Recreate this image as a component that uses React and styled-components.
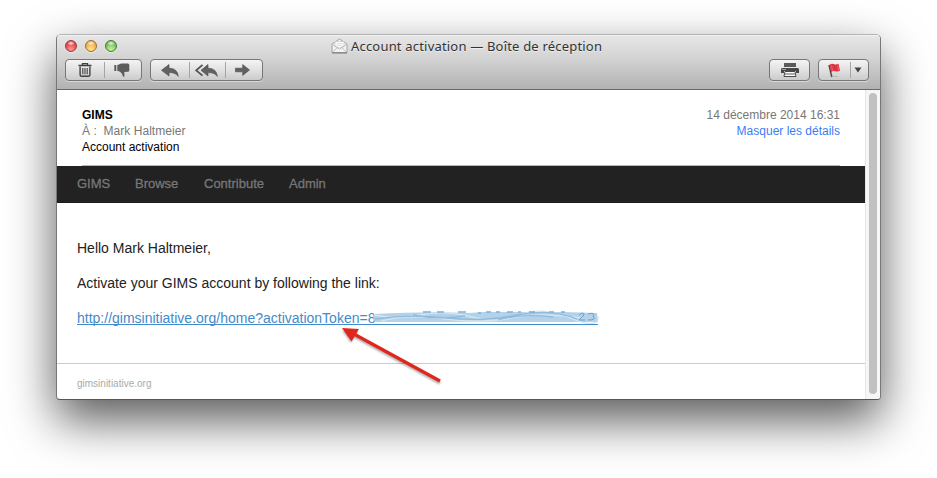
import React from 'react';
import styled, { createGlobalStyle } from 'styled-components';

const Global = createGlobalStyle`
  body { margin: 0; background: #fff; font-family: "Liberation Sans", Arial, sans-serif; }
  * { box-sizing: border-box; }
`;
const Desktop = styled.main`
  width: 937px; height: 478px; padding: 34px 56px; overflow: hidden;
`;
const Window = styled.section`
  width: 825px; height: 366px; border: 1px solid #777; border-top-color: #b4b4b4;
  border-bottom-color: #555; border-radius: 5px 5px 4px 4px; overflow: hidden; background: #fff;
  box-shadow: 0 20px 48px rgba(0,0,0,.66);
`;
const Chrome = styled.header`
  height: 55px; border-bottom: 1px solid #686868;
  background: linear-gradient(#e7e7e7, #d2d2d2 45%, #b2b2b2);
  box-shadow: inset 0 1px #f2f2f2;
`;
const TitleBar = styled.div`
  height: 24px; display: grid; grid-template-columns: 274px 1fr; align-items: center;
`;
const Lights = styled.div`display: flex; gap: 8px; padding-left: 8px; height: 14px;`;
const Light = styled.i`
  width: 12px; height: 12px; border-radius: 50%; border: 1px solid ${p => p.$edge};
  background: radial-gradient(ellipse 4px 2.5px at 50% 22%, #fffd, #fff0),
    radial-gradient(circle at 50% 85%, ${p => p.$glow}, ${p => p.$color} 75%);
  box-shadow: 0 1px #fff8;
`;
const Title = styled.h1`
  margin: -2px 0 0; display: flex; align-items: center; gap: 3px; font: 13px/20px "Noto Sans", sans-serif;
  color: #333; white-space: nowrap; text-shadow: 0 1px #fff8; letter-spacing: ${p => p.$track};
`;
const Toolbar = styled.div`display: flex; padding: 0 11px 0 8px;`;
const Group = styled.div`
  height: 22px; width: ${p => p.$w}px; margin-left: ${p => p.$gap || 0};
  border: 1px solid #777; border-radius: 4px; display: flex;
  background: linear-gradient(#f4f4f4, #e1e1e1 50%, #cbcbcb);
  box-shadow: 0 1px #ffffff70;
`;
const Tool = styled.button`
  width: ${p => p.$w}px; flex: none; padding: 0; border: 0; background: none; display: flex;
  align-items: center; justify-content: center; height: 20px;
  & + & { border-left: 1px solid #a5a5a5; height: 16px; margin-top: 2px; }
  svg { display: block; flex: none; margin-right: ${p => p.$nudge || 0}; }
`;
const Content = styled.div`display: flex; height: 309px;`;
const Message = styled.article`width: 808px;`;
const Details = styled.div`
  height: 76px; margin: 0 25px; padding-top: 17px; border-bottom: 1px solid #b3b8b5;
  display: flex; justify-content: space-between; font-size: 12px; line-height: 16px;
`;
const Column = styled.div`display: flex; flex-direction: column; align-items: ${p => p.$end ? 'flex-end' : 'flex-start'};`;
const Line = styled.span`
  color: ${p => p.$color || '#000'}; font-weight: ${p => p.$bold ? 700 : 400};
  letter-spacing: ${p => p.$track || 'normal'}; white-space: pre;
`;
const Nav = styled.nav`
  height: 37px; padding: 1px 20px 0; background: #222; border-bottom: 1px solid #1c1c1c;
  display: flex; font-size: 13px; line-height: 33px; color: #777;
  -webkit-text-stroke: .3px #777;
`;
const NavItem = styled.span`width: ${p => p.$w}px;`;
const Body = styled.div`
  height: 161px; padding: 35px 20px 0; border-bottom: 1px solid #ccc;
  font-size: 14px; line-height: 20px; color: #222;
`;
const Paragraph = styled.p`margin: 0 0 15px; white-space: nowrap;`;
const LinkRow = styled.div`
  position: relative; width: 521px; height: 17px; border-bottom: 1px solid #428bca; color: #428bca;
  line-height: 20px; white-space: nowrap;
`;
const Smudge = styled.svg`position: absolute; left: 296px; top: 2px; filter: blur(.5px);`;
const Arrow = styled.svg`position: absolute; left: 260px; top: 11px; overflow: visible;`;
const ArrowShade = styled.g`filter: blur(1px);`;
const Footer = styled.footer`padding: 13px 20px; font-size: 10px; line-height: 14px; color: #aaa;`;
const Scroll = styled.aside`
  width: 15px; padding: 3px 3px 5px; background: #f6f6f6; border-left: 1px solid #e7e7e7;
`;
const Thumb = styled.div`width: 8px; height: 301px; border-radius: 4px; background: #c1c1c1;`;

const Envelope = () => (
  <svg width="17" height="16" viewBox="0 0 17 16" fill="none">
    <path d="M1 6 8.500 1 16 6v8.500H1Z" fill="#f3f3f3" stroke="#a2a2a2" />
    <path d="M4 3.500h9v5L8.500 10 4 8.500Z" fill="#fff" stroke="#c8c8c8" strokeWidth=".8" />
    <path d="M5.500 5.500h6M5.500 7.300h6" stroke="#ccc" strokeWidth=".7" />
    <path d="m1.500 6.500 7 4.500 7-4.500M1.500 14l5-4.500M15.500 14l-5-4.500" stroke="#b1b1b1" strokeWidth=".8" />
    <path d="M1 15h15" stroke="#777" />
  </svg>
);
const Trash = () => (
  <svg width="14" height="14" viewBox="0 0 14 14" fill="none" stroke="#3f3f3f">
    <path d="M.5 2.500h13M4.500 2V.6h5V2" strokeWidth="1.300" />
    <path d="M2.100 3.500v8.200q0 1.600 1.600 1.600h6.600q1.600 0 1.600-1.600V3.500" strokeWidth="1.400" />
    <path d="M4.800 5v6.300M7 5v6.300M9.200 5v6.300" strokeWidth="1.100" />
  </svg>
);
const Thumbs = () => (
  <svg width="16" height="14" viewBox="0 0 16 14" fill="#5d5d5d">
    <path d="M.3 2h2v6h-2Z" />
    <path d="M3.300 2 5 1.400Q6.200.4 8 .4h5.800q1.500 0 1.500 1.500v5q0 1.800-1.500 1.900l-3.200.2q-.6.900-.2 2 .7 2.500-.7 2.800-1 0-1-1.400Q8.300 10.600 6 8.700L3.300 7.800Z" />
  </svg>
);
const Reply = () => (
  <svg width="18" height="13" viewBox="0 0 18 13">
    <path d="M.5 6.300 8 .5v3.700q8.500 0 9.300 8.200Q14.500 8.400 8 8.600V12Z" fill="#626262" stroke="#484848" strokeWidth=".6" />
  </svg>
);
const ReplyAll = () => (
  <svg width="23" height="13" viewBox="0 0 23 13">
    <path d="M6 6.300 13 .5v3.700q8.500 0 9.300 8.200Q19.500 8.400 13 8.600V12Z" fill="#626262" stroke="#484848" strokeWidth=".6" />
    <path d="M7.500.8 1.200 6.300l6.300 5.400" fill="none" stroke="#505050" strokeWidth="1.700" />
  </svg>
);
const Forward = () => (
  <svg width="15" height="12" viewBox="0 0 15 12">
    <path d="M.4 4.200h7.300V.6L14.500 6l-6.800 5.400V7.800H.4Z" fill="#626262" stroke="#484848" strokeWidth=".6" />
  </svg>
);
const Printer = () => (
  <svg width="18" height="14" viewBox="0 0 18 14">
    <path d="M3 0h12v4H3Z" fill="#5a5a5a" />
    <path d="M1 5h16l1 1v4h-3V8H3v2H0V6Z" fill="#484848" />
    <path d="M1.500 6.500h1M3.500 6.500h1" stroke="#eee" />
    <path d="M4 8.500h10l1 5H3Z" fill="#fff" stroke="#4a4a4a" />
    <path d="M4 11h10" stroke="#555" />
  </svg>
);
const Flag = () => (
  <svg width="13" height="15" viewBox="0 0 13 15">
    <path d="m1 2 2.800 12" stroke="#574848" strokeWidth="1.500" />
    <path d="M1.500 2q2.200-2 4.800-.8Q8.500 2 10.500.8l1.500 7q-2.500 1.300-4.500.5-2-.8-4.500.6Z" fill="#de3442" />
    <path d="m3.500 2.500 1 5.500M9.600 2.500l.9 5" stroke="#f07078" strokeWidth=".8" />
    <path d="M5 13.500h5" stroke="#bbb" />
  </svg>
);
const Down = () => <svg width="8" height="6" viewBox="0 0 8 6"><path d="M.5.500h7L4 5.500Z" fill="#444" /></svg>;

export default function App() {
  return (
    <>
      <Global />
      <Desktop>
        <Window>
          <Chrome>
            <TitleBar>
              <Lights>
                <Light $edge="#963b3b" $color="#e0353d" $glow="#ff9a96" />
                <Light $edge="#a06c30" $color="#eda33e" $glow="#ffe98e" />
                <Light $edge="#48783a" $color="#69b552" $glow="#c5f59e" />
              </Lights>
              <Title $track=".19px"><Envelope />Account activation — Boîte de réception</Title>
            </TitleBar>
            <Toolbar>
              <Group $w={77}><Tool $w={38}><Trash /></Tool><Tool $w={37} $nudge="3px"><Thumbs /></Tool></Group>
              <Group $w={113} $gap="8px"><Tool $w={38}><Reply /></Tool><Tool $w={36} $nudge="2px"><ReplyAll /></Tool><Tool $w={37} $nudge="3px"><Forward /></Tool></Group>
              <Group $w={41} $gap="auto"><Tool $w={39}><Printer /></Tool></Group>
              <Group $w={51} $gap="8px"><Tool $w={31}><Flag /></Tool><Tool $w={18} $nudge="3px"><Down /></Tool></Group>
            </Toolbar>
          </Chrome>
          <Content>
            <Message>
              <Details>
                <Column>
                  <Line $bold>GIMS</Line>
                  <Line $color="#777" $track=".04px">À :  Mark Haltmeier</Line>
                  <Line>Account activation</Line>
                </Column>
                <Column $end>
                  <Line $color="#777">14 décembre 2014 16:31</Line>
                  <Line $color="#3b7cf5">Masquer les détails</Line>
                </Column>
              </Details>
              <Nav>
                <NavItem $w={58}>GIMS</NavItem><NavItem $w={69}>Browse</NavItem>
                <NavItem $w={85}>Contribute</NavItem><NavItem $w={60}>Admin</NavItem>
              </Nav>
              <Body>
                <Paragraph>Hello Mark Haltmeier,</Paragraph>
                <Paragraph>Activate your GIMS account by following the link:</Paragraph>
                <LinkRow>
                  http://gimsinitiative.org/home?activationToken=8
                  <Smudge width="226" height="14" viewBox="0 0 226 14">
                    <path d="M1 4Q55 1 96 3L110 2h80l34 1 1 9H2Q-1 7 1 4Z" fill="#b3d1e9" />
                    <g fill="none" strokeWidth="1.300">
                      <path d="M1 5q22 5 46 0t52 2 48-2 50 3 28-2M8 11q30-7 65-2t65-1 70 0" stroke="#d2e5f3" />
                      <path d="M2 9q35-5 72-1t70-3 60 4M40 5q25 5 52 1M125 10q24-7 55-3" stroke="#8fbbdd" />
                      <path d="M50 2h8m6 0h7m14 0h8m12 1h3m5-1h5m5 0h4m7 0h6m5 0h3m8 0h6m14 0h5m7 0h4" stroke="#7eb0d8" />
                      <path d="M206 5q5-4 5 0l-5 5h6m3-6q8-2 5 2 4 4-5 4" stroke="#639fce" strokeWidth="1" />
                    </g>
                  </Smudge>
                  <Arrow width="110" height="65" viewBox="0 0 110 65">
                    <ArrowShade transform="translate(0 2)" opacity=".35" fill="#000" stroke="#000">
                      <path d="m16 14.500 87 47.500" strokeWidth="3" /><path d="m5 9 16 1-7 12Z" stroke="none" />
                    </ArrowShade>
                    <path d="m16 14.500 87 47.500" stroke="#e1261c" strokeWidth="3.200" />
                    <path d="m5 9 17 1-7.500 12.500Z" fill="#e1261c" />
                  </Arrow>
                </LinkRow>
              </Body>
              <Footer>gimsinitiative.org</Footer>
            </Message>
            <Scroll><Thumb /></Scroll>
          </Content>
        </Window>
      </Desktop>
    </>
  );
}
